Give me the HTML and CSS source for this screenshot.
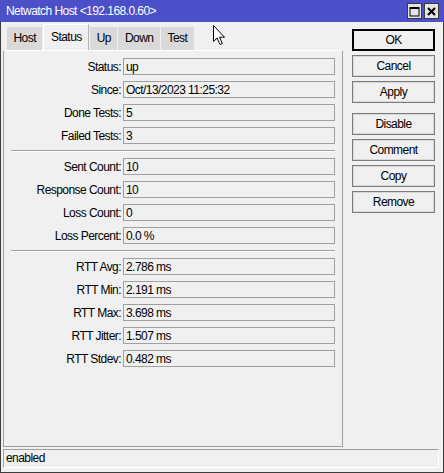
FILE: index.html
```html
<!doctype html>
<html lang="en">
 <head>
  <meta charset="UTF-8">
  <title>Netwatch Host</title>
  <link rel="stylesheet" href="styles.css">
 </head>
 <body>
  <div class="win">
	 <div class="titlebar">
		<span class="title">Netwatch Host &lt;192.168.0.60&gt;</span>
		<div class="tb_btns">
			<span class="tb_btn">
				<svg width="11" height="11" viewBox="0 0 11 11"><rect x="1" y="1.5" width="9" height="8.5" fill="none" stroke="#000" stroke-width="1"/><rect x="1" y="1" width="9" height="2" fill="#000"/></svg>
			</span>
			<span class="tb_btn">
				<svg width="11" height="11" viewBox="0 0 11 11"><path d="M2 2L9 9M9 2L2 9" stroke="#000" stroke-width="2"/></svg>
			</span>
		</div>
	 </div>
	 <div class="content">
		<div class="main">
			<!--tabs-->
			<div class="tabs">
				<span class="tab">Host</span>
				<span class="tab on">Status</span>
				<span class="tab">Up</span>
				<span class="tab">Down</span>
				<span class="tab">Test</span>
			</div>
			<div class="panel">
				<div class="grid">
					<span class="lbl">Status:</span><span class="fld">up</span>
					<span class="lbl">Since:</span><span class="fld">Oct/13/2023 11:25:32</span>
					<span class="lbl">Done Tests:</span><span class="fld">5</span>
					<span class="lbl">Failed Tests:</span><span class="fld">3</span>
					<span class="sep"></span>
					<span class="lbl">Sent Count:</span><span class="fld">10</span>
					<span class="lbl">Response Count:</span><span class="fld">10</span>
					<span class="lbl">Loss Count:</span><span class="fld">0</span>
					<span class="lbl">Loss Percent:</span><span class="fld">0.0 %</span>
					<span class="sep"></span>
					<span class="lbl">RTT Avg:</span><span class="fld">2.786 ms</span>
					<span class="lbl">RTT Min:</span><span class="fld">2.191 ms</span>
					<span class="lbl">RTT Max:</span><span class="fld">3.698 ms</span>
					<span class="lbl">RTT Jitter:</span><span class="fld">1.507 ms</span>
					<span class="lbl">RTT Stdev:</span><span class="fld">0.482 ms</span>
				</div>
			</div>
		</div>
		<!--buttons-->
		<div class="side">
			<span class="btn def">OK</span>
			<span class="btn">Cancel</span>
			<span class="btn">Apply</span>
			<span class="btn gap">Disable</span>
			<span class="btn">Comment</span>
			<span class="btn">Copy</span>
			<span class="btn">Remove</span>
		</div>
	 </div>
	 <div class="statusbar">enabled</div>
	 <svg class="cursor" width="13" height="21" viewBox="0 0 13 21"><path d="M0.5 0.5V16.5L4.2 13L7 19.5L9.3 18.5L6.6 12.2H11.5Z" fill="#fff" stroke="#000" stroke-width="1" stroke-linejoin="miter"/></svg>
  </div>
 </body>
</html>
```

FILE: styles.css
```css
*{padding:0;margin:0;box-sizing:border-box;}
body{background:#f0f0f0;font:12px "Liberation Sans",Arial,sans-serif;letter-spacing:-0.55px;color:#000;}
.win{position:relative;width:444px;height:473px;border:1px solid #3c3c3c;border-top:0;background:#f0f0f0;}
.titlebar{height:22px;margin:0 -1px;padding:0 5px 0 6px;background:#4b50c8;color:#fff;display:flex;align-items:center;justify-content:space-between;}
.tb_btns{display:flex;gap:2px;}
.tb_btn{width:15px;height:16px;border:1px solid #3a3a3a;background:#e4e4e4;display:flex;align-items:center;justify-content:center;}
.content{display:flex;height:425px;}
.main{width:342px;padding:2px 0 0 2px;display:flex;flex-direction:column;}
.tabs{height:26px;padding-left:4px;display:flex;align-items:flex-end;gap:1px;}
.tab{height:23px;line-height:23px;padding:0 6.5px;background:#d9d9d9;}
.tab.on{height:26px;line-height:25px;background:#f0f0f0;border:1px solid #fff;border-right-color:#b4b4b4;border-bottom:0;}
.panel{flex:1;border:1px solid #a0a0a0;border-top-color:#fff;padding-top:7px;}
.grid{display:grid;grid-template-columns:119px 212px;row-gap:6px;}
.lbl{text-align:right;padding-right:2px;height:17px;line-height:18px;white-space:nowrap;}
.fld{height:17px;line-height:16px;padding-left:2px;border:1px solid #a0a0a0;white-space:nowrap;}
.sep{grid-column:1/-1;margin-left:7px;height:2px;border-top:1px solid #a0a0a0;border-bottom:1px solid #fff;}
.side{width:83px;margin-left:9px;padding-top:7px;display:flex;flex-direction:column;gap:4px;}
.btn{height:22px;line-height:20px;text-align:center;border:1px solid #7c7c7c;box-shadow:inset 0 0 0 1px #d8d8d8;background:#f0f0f0;}
.btn.def{border:2px solid #000;line-height:18px;box-shadow:none;}
.btn.gap{margin-top:6px;}
.statusbar{height:19px;margin:2px 4px 0 2px;padding-left:2px;line-height:17px;border:1px solid #a0a0a0;border-right-color:#fff;border-bottom-color:#fff;}
.cursor{position:absolute;left:212px;top:25px;}
```
